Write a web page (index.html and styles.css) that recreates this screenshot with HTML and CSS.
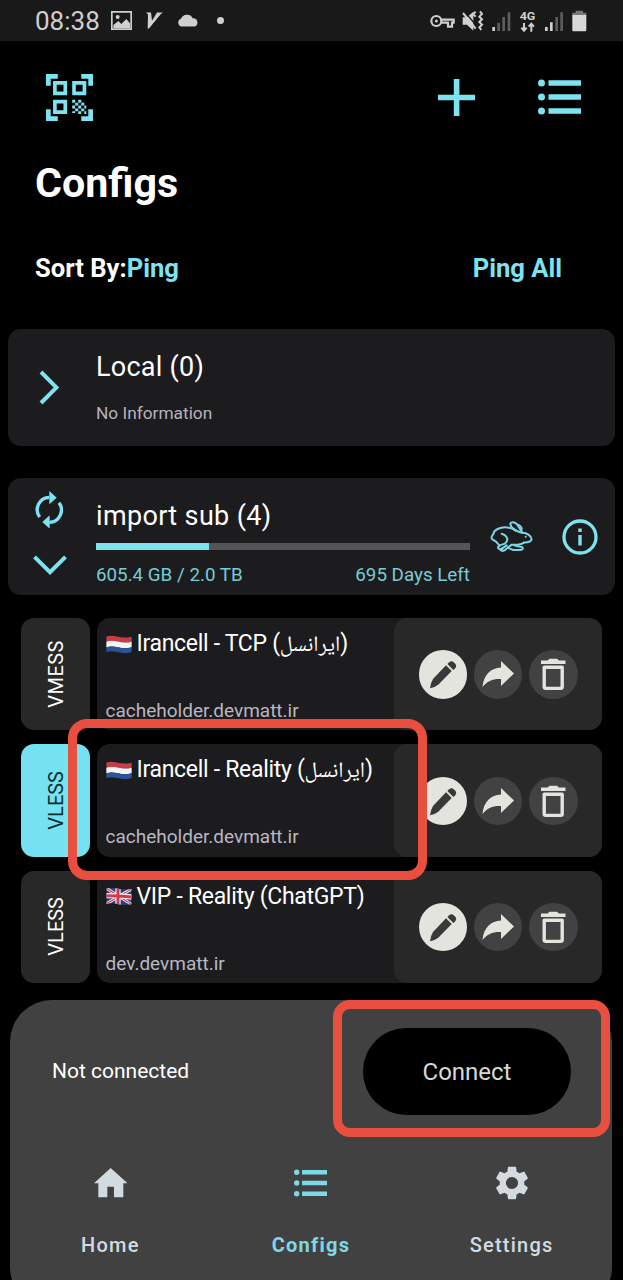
FILE: index.html
```html
<!DOCTYPE html>
<html lang="en">
<head>
<meta charset="utf-8">
<title>Configs</title>
<link rel="stylesheet" href="styles.css">
</head>
<body>
<svg width="0" height="0" class="defs">
  <symbol id="list" viewBox="0 0 43 36"><circle cx="3.5" cy="4" r="3.5"/><circle cx="3.5" cy="18" r="3.5"/><circle cx="3.5" cy="32" r="3.5"/><path d="M10.500 1.200h32.500v5.600h-32.500zM10.500 15.200h32.500v5.600h-32.500zM10.500 29.200h32.500v5.600h-32.500z"/></symbol>
  <symbol id="nl" viewBox="0 0 78 56"><path fill="#c93c46" d="M1 5C22-4 40 14 77 5V20C44 29 26 11 1 20Z"/><path fill="#f4f4f4" d="M1 20C26 11 44 29 77 20V37C44 46 26 28 1 37Z"/><path fill="#2b5499" d="M1 37C26 28 44 46 77 37V51C44 61 26 43 1 51Z"/></symbol>
  <symbol id="gb" viewBox="0 0 78 56"><clipPath id="gbwave"><path d="M1 5C22-4 40 14 77 5V51C44 61 26 43 1 51Z"/></clipPath><g clip-path="url(#gbwave)"><path fill="#28407f" d="M0 0h78v56H0z"/><path stroke="#eee" stroke-width="9" d="M0 3 78 53M0 51 78 5"/><path stroke="#d23a50" stroke-width="3.500" d="M0 3 78 53M0 51 78 5"/><path stroke="#eee" stroke-width="16" d="M36 0V56M0 26Q38 26 78 30" fill="none"/><path stroke="#d23a50" stroke-width="9" d="M36 0V56M0 26Q38 26 78 30" fill="none"/></g></symbol>
  <symbol id="pencil" viewBox="0 0 48 48"><path fill="#393939" d="M11 38.300Q11.500 33 14 29L27 15.300 32.700 21 19.500 34.500Q16 37.500 11 38.300z"/><path fill="#393939" d="M28.400 14l1.800-1.800q2.400-2 4.700.2l1.200 1.200q2.100 2.400.1 4.700l-1.800 1.700z"/></symbol>
  <symbol id="share" viewBox="0 0 48 48"><path fill="#e4e4de" d="M8.500 37C9.500 24.500 17 18 27 17.500V11L40 23.500 27 36V29C19.500 28.500 13 31 8.500 37Z"/></symbol>
  <symbol id="trash" viewBox="0 0 48 48"><path fill="#e4e4de" d="M12 10.500h6.500l2-1.800h7.500l2 1.800h6.500v3.500H12z"/><path fill="none" stroke="#e4e4de" stroke-width="3.400" stroke-linejoin="round" d="M15.200 17.300h18v19.500q0 1.600-1.600 1.600H16.800q-1.600 0-1.600-1.600z"/></symbol>
</svg>
<div class="screen">
  <header class="status">
    <span class="clock">08:38</span>
    <svg class="s-photo" viewBox="0 0 63 57"><path fill="none" stroke="#cfcfcf" stroke-width="5" d="M2.500 2.500h58v52h-58z"/><circle cx="20" cy="18" r="6" fill="#cfcfcf"/><path fill="#cfcfcf" d="M7 51V42L22 30 31 39 46 24 57 37V51z"/></svg>
    <svg class="s-v" viewBox="0 0 51 50"><path fill="#cfcfcf" d="M0 1H15L18 26 33 1H51L44 6 9 49H5L6 7z"/></svg>
    <svg class="s-cloud" viewBox="0 0 67 38"><path fill="#cfcfcf" d="M13 37A12 12 0 0 1 12 14 20 20 0 0 1 48 12 13 13 0 0 1 54 37Z"/></svg>
    <i class="s-dot"></i>
    <svg class="s-right" viewBox="0 0 480 70">
      <g fill="none" stroke="#d0d0d0" stroke-width="6.500"><circle cx="19" cy="33" r="15"/><path d="M34 29H71V38H66V50H54V38H34"/></g><circle cx="19" cy="33" r="4.500" fill="#d0d0d0"/>
      <path fill="#d0d0d0" d="M98 22H111L130 5V62L111 44H98z"/><path stroke="#191919" stroke-width="4" d="M104 5 140 48"/><path stroke="#d0d0d0" stroke-width="6" d="M99 9 137 56"/>
      <path fill="none" stroke="#d0d0d0" stroke-width="6" d="M137 5l-8 7 8 8M150 4l6 8-8 8 8 8-8 8 8 8-8 8 6 8"/>
      <g fill="#5d5d5d"><path d="M202 38h8v25h-8zM217 21h8v42h-8zM233 7h8v56h-8zM376 21h8v42h-8zM391 7h8v56h-8z"/></g>
      <path fill="#d0d0d0" d="M187 51h8v12h-8zM345 51h8v12h-8zM360 37h8v26h-8z"/>
      <text x="269" y="30" class="s-4g" textLength="47" lengthAdjust="spacingAndGlyphs">4G</text>
      <path fill="none" stroke="#d0d0d0" stroke-width="6" d="M282 39V61M274 53l8 9 8-9M304 65V42M296 50l8-9 8 9"/>
      <path fill="#777" d="M437 2h22v6h10v8h-42V8h10z"/><path fill="#d8d8d8" d="M427 15h42v46q0 3-3 3h-36q-3 0-3-3z"/>
    </svg>
  </header>

  <div class="toolbar">
    <svg class="qr" viewBox="0 0 140 140"><path d="M0 0H35V14H14V35H0zM105 0H140V35H126V14H105zM0 105H14V126H35V140H0zM126 105H140V140H105V126H126z"/><path fill-rule="evenodd" d="M21 21H63V63H21zM32 32V52H52V32zM78 21H120V63H78zM89 32V52H109V32zM21 77H63V119H21zM32 88V108H52V88z"/><path d="M78 77h9v9h-9zM96 77h9v9h-9zM87 86h9v8h-9zM105 86h9v8h-9zM78 94h9v9h-9zM96 94h9v9h-9zM87 103h9v8h-9zM105 103h9v8h-9zM96 111h9v8h-9zM114 94h6v9h-6zM78 111h9v5h-9zM114 111h6v8h-6z"/></svg>
    <svg class="plus" viewBox="0 0 37 37"><path d="M15.800 0h5.600v15.700H37v5.600H21.400V37h-5.600V21.300H0v-5.600h15.800z"/></svg>
    <svg class="menu"><use href="#list"/></svg>
  </div>

  <h1 class="title">Configs</h1>
  <div class="sort"><div><span class="sort-label">Sort By:</span><span class="sort-value">Ping</span></div><span class="ping-all">Ping All</span></div>

  <section class="group group-local">
    <div class="lead"><svg class="chev-right" viewBox="0 0 20 35"><path d="M2 2 17.500 17.500 2 33"/></svg></div>
    <div class="group-body"><div class="group-name name-local">Local (0)</div><div class="note"><span>No Information</span></div></div>
  </section>

  <section class="group">
    <div class="lead lead-two">
      <svg class="sync" viewBox="0 0 86 112"><g fill="none" stroke="#7de3f1" stroke-width="10"><path d="M14 78A37 37 0 0 1 43 19"/><path d="M72 35A37 37 0 0 1 43 94"/></g><path fill="#7de3f1" d="M43 0 65 20 43 40zM44 73V113L22 93z"/></svg>
      <svg class="chev-down" viewBox="0 0 34 20"><path d="M1.500 1.800 17 17.200 32.500 1.800"/></svg>
    </div>
    <div class="group-body usage">
      <div class="group-name name-sub">import sub (4)</div>
      <div class="bar"><div class="bar-fill" style="width:30.2%"></div></div>
      <div class="quota"><span class="q1">605.4 GB / 2.0 TB</span><span class="q2">695 Days Left</span></div>
    </div>
    <svg class="rabbit" viewBox="530 150 135 100"><g fill="none" stroke="#7bd6e2" stroke-width="6" stroke-linecap="round" stroke-linejoin="round"><path d="M611 181C600 176 594 168 594 160 600 153 612 157 619 170L630 188C645 188 657 199 658 208 655 217 645 217 634 218"/><path d="M627 183C630 178 628 168 617 164"/><path d="M610 182C597 172 574 168 556 177 548 181 543 186 544 191 537 198 536 205 540 208L551 215 561 226"/><path d="M611 182C617 184 621 186 628 188"/><path d="M568 191C580 194 588 204 584 213L578 221C572 223 564 224 561 228 555 230 556 235 561 237L570 239"/><path d="M634 218C624 226 612 224 598 224L586 233C580 240 575 245 569 242 562 241 562 237 570 235L583 226"/><path d="M604 225C612 230 627 229 630 232 634 237 629 240 622 240H604C598 239 594 235 587 234"/></g><circle cx="640" cy="200" r="3" fill="#7bd6e2"/></svg>
    <svg class="info" viewBox="0 0 36 36"><circle cx="18" cy="18" r="16" fill="none" stroke="#7de3f1" stroke-width="3.300"/><path fill="#7de3f1" d="M16.300 9.500h3.400v3.500h-3.400zM16.300 16h3.400v10.500h-3.400z"/></svg>
  </section>

  <main class="servers">
    <article class="server">
      <div class="proto"><span class="p-vmess">VMESS</span></div>
      <div class="card"><div class="info-col"><div class="name"><svg class="flag"><use href="#nl"/></svg><span class="label">Irancell - TCP (<span class="fa">ایرانسل</span>)</span></div><div class="host"><span>cacheholder.devmatt.ir</span></div></div>
      <div class="actions"><span class="act light"><svg><use href="#pencil"/></svg></span><span class="act"><svg><use href="#share"/></svg></span><span class="act"><svg><use href="#trash"/></svg></span></div></div>
    </article>
    <article class="server selected">
      <div class="proto"><span>VLESS</span></div>
      <div class="card"><div class="info-col"><div class="name"><svg class="flag"><use href="#nl"/></svg><span class="label">Irancell - Reality (<span class="fa">ایرانسل</span>)</span></div><div class="host"><span>cacheholder.devmatt.ir</span></div></div>
      <div class="actions"><span class="act light"><svg><use href="#pencil"/></svg></span><span class="act"><svg><use href="#share"/></svg></span><span class="act"><svg><use href="#trash"/></svg></span></div></div>
      <div class="mark mark-server"></div>
    </article>
    <article class="server">
      <div class="proto"><span>VLESS</span></div>
      <div class="card"><div class="info-col"><div class="name"><svg class="flag"><use href="#gb"/></svg><span class="label">VIP - Reality (ChatGPT)</span></div><div class="host"><span>dev.devmatt.ir</span></div></div>
      <div class="actions"><span class="act light"><svg><use href="#pencil"/></svg></span><span class="act"><svg><use href="#share"/></svg></span><span class="act"><svg><use href="#trash"/></svg></span></div></div>
    </article>
  </main>

  <footer class="sheet">
    <div class="connect-row"><span class="state">Not connected</span><div class="connect"><span>Connect</span><div class="mark mark-connect"></div></div></div>
    <nav class="tabs">
      <div class="tab"><div class="tab-icon"><svg class="home" viewBox="0 0 101 88"><path d="M50 0 101 46H88V88H60V56H40V88H13V46H0z"/></svg></div><span>Home</span></div>
      <div class="tab active"><div class="tab-icon"><svg class="tab-list"><use href="#list"/></svg></div><span>Configs</span></div>
      <div class="tab"><div class="tab-icon"><svg class="gear" viewBox="2 2 20 20"><path d="M19.140 12.940c.040-.300.060-.610.060-.940 0-.320-.020-.640-.070-.940l2.030-1.580c.180-.140.230-.410.120-.610l-1.920-3.320c-.120-.220-.370-.290-.590-.220l-2.390.960c-.500-.380-1.030-.700-1.620-.940L14.400 2.810c-.040-.240-.240-.410-.480-.410h-3.840c-.240 0-.430.170-.470.410L9.250 5.350c-.590.240-1.130.570-1.620.940L5.240 5.330c-.220-.080-.470 0-.590.220L2.740 8.870c-.120.210-.080.470.120.610l2.030 1.580c-.050.300-.090.630-.090.940s.020.640.070.940l-2.030 1.580c-.180.140-.230.410-.120.610l1.920 3.320c.120.220.370.290.590.220l2.390-.960c.500.380 1.030.700 1.620.940l.360 2.540c.050.240.240.410.480.410h3.840c.240 0 .440-.170.470-.410l.360-2.540c.590-.240 1.130-.560 1.620-.940l2.390.960c.220.080.470 0 .590-.220l1.920-3.320c.120-.220.070-.470-.120-.610zM12 15.600A3.600 3.600 0 1 1 12 8.400a3.600 3.600 0 0 1 0 7.200z"/></svg></div><span>Settings</span></div>
    </nav>
  </footer>
</div>
</body>
</html>
```
FILE: styles.css
```css
* { box-sizing: border-box; }
body { margin: 0; background: #000; color: #fff; font-family: Roboto, "Noto Sans", "DejaVu Sans", sans-serif; }
svg { display: block; flex: none; }
.defs { position: absolute; }
.screen { width: 623px; height: 1280px; overflow: hidden; display: flex; flex-direction: column; background: #000; white-space: nowrap; }
.screen > * { flex: none; }

.status { height: 41px; background: #191919; display: flex; align-items: center; padding: 0 26px 0 35px; }
.clock { font-size: 26px; color: #cfcfcf; width: 76px; line-height: 41px; padding-top: 2px; }
.s-photo { width: 21px; height: 19px; }
.s-v { width: 17px; height: 17px; margin-left: 14px; }
.s-cloud { width: 22px; height: 13px; margin-left: 14px; }
.s-dot { width: 7px; height: 7px; border-radius: 50%; background: #cfcfcf; margin-left: 18px; }
.s-right { width: 160px; height: 23.333px; margin-left: auto; margin-right: 7px; margin-top: 2px; }
.s-4g { font: 700 35px Roboto, sans-serif; fill: #d0d0d0; }

.toolbar { height: 112px; display: flex; align-items: center; padding: 0 42px 0 46px; fill: #7de3f1; }
.qr { width: 47px; height: 47px; }
.plus { width: 37px; height: 37px; margin-left: auto; }
.menu { width: 43px; height: 36px; margin-left: 63px; }

.title { margin: 0; padding: 1px 0 0 35px; height: 58px; font-size: 41.200px; line-height: 58px; font-weight: 700; }
.sort { height: 118px; display: flex; justify-content: space-between; align-items: flex-start; padding: 42px 61px 0 35px; font-size: 25.600px; line-height: 30px; font-weight: 700; }
.sort-value, .ping-all { color: #7de3f1; }

.group { height: 117px; margin: 0 8px 32px; border-radius: 13px; background: #1c1c1e; display: flex; align-items: center; }
.lead { width: 88px; padding-left: 31px; }
.lead-two { padding-left: 24.500px; height: 117px; padding-top: 13px; display: flex; flex-direction: column; gap: 27px; }
.chev-right, .chev-down { fill: none; stroke: #7de3f1; stroke-width: 4; }
.chev-right { width: 20px; height: 35px; }
.sync { width: 28.667px; height: 37.333px; margin-left: 2px; }
.chev-down { width: 34px; height: 20px; }
.group-body { width: 374px; height: 117px; padding-top: 20px; }
.group-name { font-size: 27px; line-height: 36px; }
.name-local { letter-spacing: 0.250px; }
.name-sub { letter-spacing: 0.350px; }
.note { font-size: 17.300px; line-height: 24px; margin-top: 16px; color: #b5b2bd; }
.bar { height: 7px; background: #555557; margin-top: 9px; }
.bar-fill { height: 7px; background: #7de3f1; }
.quota { display: flex; justify-content: space-between; margin-top: 13px; font-size: 18.800px; line-height: 24px; color: #78ccd7; }
.rabbit { width: 45px; height: 33.333px; margin-left: 19px; }
.info { width: 36px; height: 36px; margin-left: 28px; }

.servers { padding: 0 21px; height: 382px; margin-top: -9px; display: flex; flex-direction: column; gap: 14px; }
.server { height: 112.300px; display: flex; gap: 7px; position: relative; }
.proto { width: 69px; border-radius: 13px; background: #282828; display: flex; align-items: center; justify-content: center; font-size: 20px; }
.proto span { writing-mode: vertical-rl; transform: rotate(180deg); line-height: 24px; }
.proto .p-vmess { letter-spacing: 0.500px; }
.selected .proto { background: #75e2f1; color: #0b2b30; }
.card { width: 505px; border-radius: 13px; background: #1c1c1e; display: flex; justify-content: space-between; }
.info-col { padding: 10px 0 0 8.500px; }
.name { display: flex; align-items: center; gap: 5px; height: 32px; font-size: 23px; line-height: 32px; }
.label { letter-spacing: -0.300px; padding-top: 1px; }
.flag { width: 26px; height: 18.667px; }
.fa { font-family: "Noto Naskh Arabic", "Noto Sans Arabic", "DejaVu Sans", sans-serif; letter-spacing: 0; font-size: 22px; }
.host { font-size: 19px; line-height: 24px; margin-top: 39px; color: #b9b7c2; }
.actions { width: 208px; border-radius: 13px; background: #282828; display: flex; align-items: center; gap: 6.800px; padding: 1px 0 0 24.500px; }
.act { width: 48.500px; height: 48.500px; border-radius: 50%; background: #424242; }
.act.light { background: #e4e4de; }
.act svg { width: 48px; height: 48px; }

.mark { position: absolute; border: 9px solid #e94f3e; z-index: 3; }
.mark-server { left: 47px; top: -25.500px; width: 358.500px; height: 161.500px; border-radius: 19px; }

.sheet { width: 602px; height: 309px; margin-left: 10px; background: #414141; border-radius: 42px; }
.connect-row { height: 142px; display: flex; align-items: center; justify-content: space-between; padding: 0 41px 0 42px; }
.state { font-size: 21px; line-height: 26px; }
.connect { width: 208px; height: 87px; border-radius: 44px; background: #000; position: relative; display: flex; align-items: center; justify-content: center; font-size: 24px; color: #d5d9da; }
.connect span { padding-top: 2px; }
.mark-connect { left: -30px; top: -28px; width: 277px; height: 137px; border-radius: 17px; }
.tabs { display: flex; color: #d3dbe0; fill: #d3dbe0; }
.tab { width: 33.333%; display: flex; flex-direction: column; align-items: center; font-size: 20px; line-height: 26px; font-weight: 500; letter-spacing: 1.250px; }
.tab-icon { height: 82px; display: flex; align-items: center; margin-bottom: 8px; }
.home { width: 33.667px; height: 29.333px; }
.tab-list { width: 33px; height: 28px; }
.gear { width: 34px; height: 34px; }
.active { color: #7dd9e5; fill: #7dd9e5; font-weight: 700; }
```
